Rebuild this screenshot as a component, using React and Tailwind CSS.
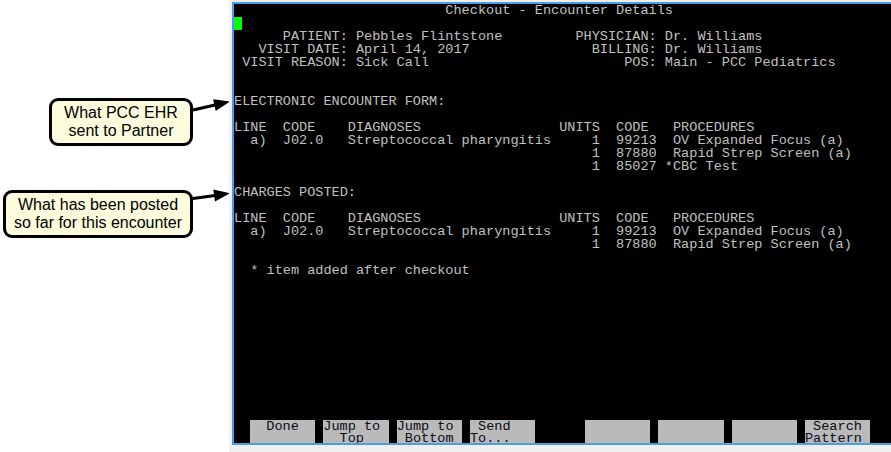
import React from "react";

const header = "LINE  CODE    DIAGNOSES".padEnd(40) + "UNITS  CODE   PROCEDURES";
const lineA = "  a)  J02.0   Streptococcal pharyngitis".padEnd(44) + "1  99213  OV Expanded Focus (a)";
const strep = " ".repeat(44) + "1  87880  Rapid Strep Screen (a)";
const cbc = " ".repeat(44) + "1  85027 *CBC Test";

const rows = [
  " ".repeat(26) + "Checkout - Encounter Details",
  "__CURSOR__",
  "      PATIENT: Pebbles Flintstone".padEnd(42) + "PHYSICIAN: Dr. Williams",
  "   VISIT DATE: April 14, 2017".padEnd(44) + "BILLING: Dr. Williams",
  " VISIT REASON: Sick Call".padEnd(48) + "POS: Main - PCC Pediatrics",
  "",
  "",
  "ELECTRONIC ENCOUNTER FORM:",
  "",
  header,
  lineA,
  strep,
  cbc,
  "",
  "CHARGES POSTED:",
  "",
  header,
  lineA,
  strep,
  "",
  "  * item added after checkout",
];

const group1 = ["  Done", "Jump to\n  Top", "Jump to\n Bottom", " Send\nTo..."];
const group2 = ["", "", "", " Search\nPattern"];

function Callout({ lines, w }) {
  return (
    <div
      className={`h-[48px] shrink-0 rounded-[9px] border-[3px] border-black bg-[#fcfcdc] flex flex-col items-center justify-center text-[16px] leading-[18px] text-black ${w}`}
      style={{ fontFamily: '"Liberation Sans", Arial, sans-serif' }}
    >
      {lines.map((l) => (
        <div key={l}>{l}</div>
      ))}
    </div>
  );
}

function FKey({ label }) {
  return (
    <div className="w-[65.33px] h-[23px] overflow-hidden bg-[#bababa] text-[#0a0a14] whitespace-pre leading-[12px] pt-[1px]">
      {label}
    </div>
  );
}

export default function App() {
  return (
    <div className="w-[891px] h-[452px] flex bg-white overflow-hidden">
      {/* annotations */}
      <div className="w-[229px] shrink-0 flex flex-col">
        <div className="mt-[98px] pl-[49px] flex items-start">
          <Callout w="w-[144px]" lines={["What PCC EHR", "sent to Partner"]} />
          <svg width="37" height="48" className="overflow-visible shrink-0">
            <line x1="0" y1="12" x2="22" y2="7" stroke="black" strokeWidth="3" />
            <polygon points="37,3.5 22.7,12.9 20.1,1.2" fill="black" />
          </svg>
        </div>
        <div className="mt-[44px] pl-[3px] flex items-start">
          <Callout w="w-[190px]" lines={["What has been posted", "so far for this encounter"]} />
          <svg width="37" height="48" className="overflow-visible shrink-0">
            <line x1="0" y1="8.5" x2="22" y2="5.4" stroke="black" strokeWidth="3" />
            <polygon points="37,3.3 22,11.5 20.3,-0.4" fill="black" />
          </svg>
        </div>
      </div>

      {/* terminal window */}
      <div className="flex-1 bg-[#f0f0f0] pt-[2px] pl-[3px] pb-[7px] flex">
        <div
          className="flex-1 flex flex-col border-t-2 border-l-2 border-b-2 border-[#4c9de9] bg-black text-[#c0c0c0] text-[13.55px] leading-[13px] overflow-hidden"
          style={{ fontFamily: '"Liberation Mono", "DejaVu Sans Mono", monospace' }}
        >
          <div className="flex flex-col">
            {rows.map((r, i) =>
              r === "__CURSOR__" ? (
                <div key={i} className="h-[13px]">
                  <div className="w-[8px] h-[13px] bg-[#00ff00]" />
                </div>
              ) : (
                <div key={i} className="h-[13px] whitespace-pre">
                  {r}
                </div>
              )
            )}
          </div>
          <div className="flex-1" />
          <div className="flex pl-[16px]">
            <div className="flex gap-[8px]">
              {group1.map((l, i) => (
                <FKey key={i} label={l} />
              ))}
            </div>
            <div className="flex gap-[8px] ml-[49.7px]">
              {group2.map((l, i) => (
                <FKey key={i} label={l} />
              ))}
            </div>
          </div>
        </div>
      </div>
    </div>
  );
}
